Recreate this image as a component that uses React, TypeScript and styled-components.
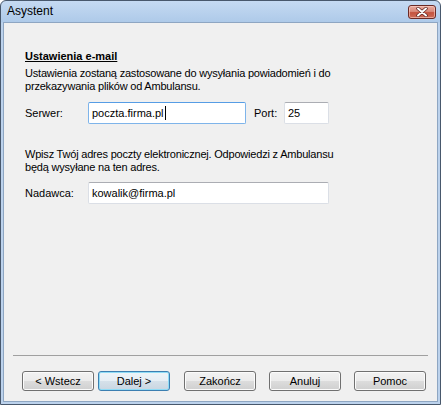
import React from "react";
import styled, { createGlobalStyle } from "styled-components";

const GlobalStyle = createGlobalStyle`
  html, body {
    margin: 0;
    padding: 0;
    background: #ffffff;
  }
  body {
    font-family: "Liberation Sans", Arial, sans-serif;
    font-size: 11px;
    color: #000;
  }
`;

const Window = styled.div`
  width: 441px;
  height: 405px;
  box-sizing: border-box;
  display: flex;
  flex-direction: column;
  border: 1px solid #48586c;
  border-radius: 6px 6px 0 0;
  background: linear-gradient(#c5daf2 0px, #aecae9 21px, #bcd2ec 22px, #bcd2ec 100%);
  overflow: hidden;
`;

const TitleBar = styled.div`
  height: 21px;
  flex-shrink: 0;
  display: flex;
  justify-content: space-between;
  align-items: flex-start;
  padding: 0 4px 0 6px;
`;

const Title = styled.span`
  font-size: 12px;
  line-height: 21px;
  color: #000;
`;

const CloseButton = styled.div`
  margin-top: 4px;
  width: 28px;
  height: 14px;
  box-sizing: border-box;
  border: 1px solid #6b2a25;
  border-radius: 3px;
  background: linear-gradient(#e9a99d 0%, #d98b7c 45%, #c4533f 55%, #cd6b57 100%);
  box-shadow: inset 0 0 0 1px rgba(255, 215, 205, 0.55);
  display: flex;
  align-items: center;
  justify-content: center;
`;

const Client = styled.div`
  flex: 1;
  margin: 0 2px 2px 2px;
  border: 1px solid #8ea6c2;
  background: #f0f0f0;
  display: flex;
  flex-direction: column;
`;

const Content = styled.div`
  flex: 1;
  display: flex;
  flex-direction: column;
  padding: 27px 0 0 21px;
`;

const Heading = styled.div`
  font-weight: bold;
  text-decoration: underline;
  line-height: 13px;
`;

const Paragraph = styled.p<{ $top: number }>`
  margin: ${(p) => p.$top}px 0 0 0;
  line-height: 13px;
  letter-spacing: -0.2px;
`;

const FieldRow = styled.div<{ $top: number }>`
  margin-top: ${(p) => p.$top}px;
  display: flex;
  align-items: center;
  height: 22px;
`;

const Label = styled.span<{ $width: number; $gap?: number }>`
  width: ${(p) => p.$width}px;
  margin-left: ${(p) => p.$gap ?? 0}px;
  flex-shrink: 0;
`;

const TextBox = styled.div<{ $width: number; $focused?: boolean }>`
  width: ${(p) => p.$width}px;
  height: 22px;
  box-sizing: border-box;
  background: #fff;
  border: 1px solid ${(p) => (p.$focused ? "#7eb4ea" : "#dbdfe6")};
  border-top-color: ${(p) => (p.$focused ? "#569de5" : "#abadb3")};
  border-radius: 2px;
  padding-left: 3px;
  display: flex;
  align-items: center;
  white-space: nowrap;
`;

const Caret = styled.span`
  display: inline-block;
  width: 1px;
  height: 14px;
  background: #000;
  margin-left: 1px;
`;

const Footer = styled.div`
  display: flex;
  flex-direction: column;
  padding-bottom: 10px;
`;

const Separator = styled.div`
  height: 1px;
  margin: 0 9px;
  background: #a0a0a0;
`;

const ButtonRow = styled.div`
  display: flex;
  margin-top: 15px;
  padding-left: 18px;
`;

const Button = styled.div<{ $gap: number; $default?: boolean }>`
  width: 72px;
  height: 20px;
  margin-left: ${(p) => p.$gap}px;
  box-sizing: border-box;
  border: 1px solid ${(p) => (p.$default ? "#3c7fb1" : "#707070")};
  border-radius: 3px;
  background: ${(p) =>
    p.$default
      ? "linear-gradient(#eef4f8 0%, #e6eef4 50%, #d6e1ea 50%, #c9d6e1 100%)"
      : "linear-gradient(#f2f2f2 0%, #ebebeb 50%, #dddddd 50%, #cfcfcf 100%)"};
  box-shadow: inset 0 0 0 1px ${(p) => (p.$default ? "#8fdcf6" : "#fbfbfb")};
  display: flex;
  align-items: center;
  justify-content: center;
  line-height: 13px;
`;

export default function App() {
  return (
    <>
      <GlobalStyle />
      <Window>
        <TitleBar>
          <Title>Asystent</Title>
          <CloseButton>
            <svg width="14" height="10" viewBox="0 0 14 10">
              <path d="M3 1.5 L11 8.5 M11 1.5 L3 8.5" stroke="#5a2320" strokeWidth="3.4" strokeLinecap="round" />
              <path d="M3 1.5 L11 8.5 M11 1.5 L3 8.5" stroke="#ffffff" strokeWidth="2" strokeLinecap="round" />
            </svg>
          </CloseButton>
        </TitleBar>
        <Client>
          <Content>
            <Heading>Ustawienia e-mail</Heading>
            <Paragraph $top={4}>
              Ustawienia zostaną zastosowane do wysyłania powiadomień i do
              <br />
              przekazywania plików od Ambulansu.
            </Paragraph>
            <FieldRow $top={9}>
              <Label $width={63}>Serwer:</Label>
              <TextBox $width={158} $focused>
                poczta.firma.pl
                <Caret />
              </TextBox>
              <Label $width={30} $gap={8}>Port:</Label>
              <TextBox $width={45}>25</TextBox>
            </FieldRow>
            <Paragraph $top={24}>
              Wpisz Twój adres poczty elektronicznej. Odpowiedzi z Ambulansu
              <br />
              będą wysyłane na ten adres.
            </Paragraph>
            <FieldRow $top={8}>
              <Label $width={63}>Nadawca:</Label>
              <TextBox $width={241}>kowalik@firma.pl</TextBox>
            </FieldRow>
          </Content>
          <Footer>
            <Separator />
            <ButtonRow>
              <Button $gap={0}>&lt; Wstecz</Button>
              <Button $gap={4} $default>
                Dalej &gt;
              </Button>
              <Button $gap={14}>Zakończ</Button>
              <Button $gap={13}>Anuluj</Button>
              <Button $gap={13}>Pomoc</Button>
            </ButtonRow>
          </Footer>
        </Client>
      </Window>
    </>
  );
}
